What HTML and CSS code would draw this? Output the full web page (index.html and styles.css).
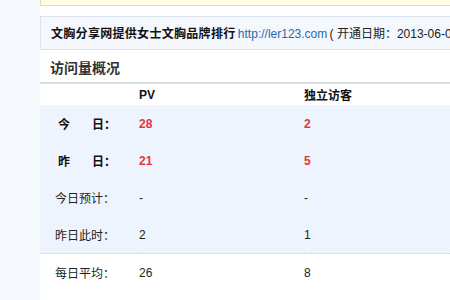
FILE: index.html
```html
<!DOCTYPE html>
<html lang="zh-CN">
<head>
<meta charset="utf-8">
<link rel="stylesheet" href="styles.css">
</head>
<body>
<div class="page">
  <div class="notice"></div>
  <div class="site-bar">
    <span class="site-name">文胸分享网提供女士文胸品牌排行</span>
    <a class="site-link" href="#">http://ler123.com</a>
    <span class="site-meta">( 开通日期：2013-06-03 )</span>
  </div>
  <h2 class="section-title">访问量概况</h2>
  <table class="stats">
    <colgroup><col class="c1"><col class="c2"><col class="c3"></colgroup>
    <thead>
      <tr><th></th><th>PV</th><th>独立访客</th></tr>
    </thead>
    <tbody>
      <tr class="alt strong"><td><span class="k">今</span>日：</td><td class="red">28</td><td class="red">2</td></tr>
      <tr class="alt strong"><td><span class="k">昨</span>日：</td><td class="red">21</td><td class="red">5</td></tr>
      <tr class="alt"><td>今日预计：</td><td>-</td><td>-</td></tr>
      <tr class="alt last"><td>昨日此时：</td><td>2</td><td>1</td></tr>
      <tr><td>每日平均：</td><td>26</td><td>8</td></tr>
    </tbody>
  </table>
</div>
</body>
</html>
```

FILE: styles.css
```css
html, body {
  margin: 0;
  padding: 0;
}
body {
  background: #f5f9fe;
  font-family: "Liberation Sans", Arial, "Noto Sans CJK SC", sans-serif;
  font-size: 12px;
  color: #222;
  overflow: hidden;
}
.page {
  margin-left: 40px;
  width: 700px;
  background: #fff;
  min-height: 300px;
}
.notice {
  height: 5px;
  background: #fffde6;
  border-left: 1px solid #e8e0b0;
  border-bottom: 1px solid #eedf9a;
}
.site-bar {
  margin-top: 10px;
  height: 32px;
  line-height: 32px;
  background: #f4f7fc;
  border: 1px solid #d9e2ee;
  border-right: none;
  padding-left: 10px;
  white-space: nowrap;
}
.site-name {
  font-family: "Noto Sans CJK SC", sans-serif;
  font-weight: bold;
  font-size: 12px;
  letter-spacing: 0.3px;
  color: #111;
}
.site-link {
  color: #2a67b1;
  text-decoration: none;
  margin-left: -1px;
}
.site-meta {
  color: #222;
  margin-left: -1px;
}
.section-title {
  margin: 0;
  padding: 2px 0 0 10px;
  height: 30px;
  line-height: 30px;
  font-family: "Noto Sans CJK SC", sans-serif;
  font-size: 14px;
  font-weight: bold;
  color: #333;
  border-bottom: 2px solid #d6dce4;
}
.stats {
  border-collapse: collapse;
  width: 100%;
}
.stats col.c1 { width: 99px; }
.stats col.c2 { width: 165px; }
.stats th {
  height: 21px;
  padding: 0;
  text-align: left;
  font-weight: bold;
  font-size: 12px;
  color: #111;
  vertical-align: middle;
}
.stats th, .stats td {
  font-family: "Liberation Sans", Arial, "Noto Sans CJK SC", sans-serif;
}
.stats td {
  height: 37px;
  padding: 0;
  vertical-align: middle;
  color: #222;
}
.stats td:first-child {
  padding-left: 15px;
}
.stats tr.alt td {
  background: #eef4fd;
}
.stats tr.last td {
  border-bottom: 1px dotted #c9d3df;
}
.stats tr.strong td {
  font-weight: bold;
  color: #111;
}
.stats tr.strong td:first-child {
  padding-left: 18px;
}
.stats .k {
  margin-right: 22px;
}
.stats tr td.red {
  color: #e0383d;
  font-weight: bold;
}
```
